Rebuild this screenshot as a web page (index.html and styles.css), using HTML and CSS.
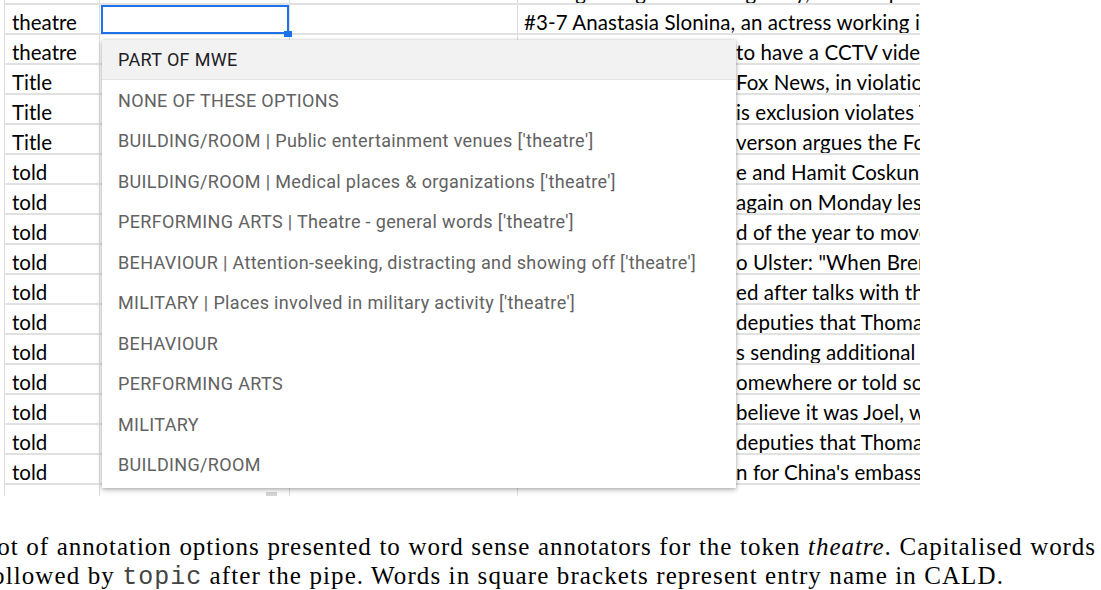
FILE: index.html
```html
<!DOCTYPE html>
<html lang="en">
<head>
<meta charset="utf-8">
<title>Annotation options</title>
<link rel="stylesheet" href="styles.css">
</head>
<body>
<div class="page">
  <div class="sheet">
    <div class="row first">
      <div class="cell c1">theatre</div><div class="cell c2"></div><div class="cell c3"></div>
      <div class="cell c4">Ending a long run at the gallery, the company played; on for another year</div>
    </div>
    <div class="row">
      <div class="cell c1">theatre</div><div class="cell c2 sel"></div><div class="cell c3"></div>
      <div class="cell c4">#3-7 Anastasia Slonina, an actress working in the theatre</div>
    </div>
    <div class="row">
      <div class="cell c1">theatre</div><div class="cell c2"></div><div class="cell c3"></div>
      <div class="cell c4"><span class="hid">Police said they were lucky enough</span> to have a CCTV video of the entrance</div>
    </div>
    <div class="row">
      <div class="cell c1">Title</div><div class="cell c2"></div><div class="cell c3"></div>
      <div class="cell c4"><span class="hid">He was later barred from the debate by </span>Fox News, in violation of its rules</div>
    </div>
    <div class="row">
      <div class="cell c1">Title</div><div class="cell c2"></div><div class="cell c3"></div>
      <div class="cell c4"><span class="hid">The lawsuit claims that th</span>is exclusion violates Title IX</div>
    </div>
    <div class="row">
      <div class="cell c1">Title</div><div class="cell c2"></div><div class="cell c3"></div>
      <div class="cell c4"><span class="hid">In his complaint, I</span>verson argues the Fox network</div>
    </div>
    <div class="row">
      <div class="cell c1">told</div><div class="cell c2"></div><div class="cell c3"></div>
      <div class="cell c4"><span class="hid">Both Michael Bor</span>e and Hamit Coskun were told</div>
    </div>
    <div class="row">
      <div class="cell c1">told</div><div class="cell c2"></div><div class="cell c3"></div>
      <div class="cell c4"><span class="hid">The two sides met</span> again on Monday less than a week</div>
    </div>
    <div class="row">
      <div class="cell c1">told</div><div class="cell c2"></div><div class="cell c3"></div>
      <div class="cell c4"><span class="hid">They were told to wait until the en</span>d of the year to move out</div>
    </div>
    <div class="row">
      <div class="cell c1">told</div><div class="cell c2"></div><div class="cell c3"></div>
      <div class="cell c4"><span class="hid">He later told a reporter t</span>o Ulster: "When Brendan came</div>
    </div>
    <div class="row">
      <div class="cell c1">told</div><div class="cell c2"></div><div class="cell c3"></div>
      <div class="cell c4"><span class="hid">The strike was call</span>ed after talks with the union</div>
    </div>
    <div class="row">
      <div class="cell c1">told</div><div class="cell c2"></div><div class="cell c3"></div>
      <div class="cell c4"><span class="hid">A witness told the </span>deputies that Thomas had left</div>
    </div>
    <div class="row">
      <div class="cell c1">told</div><div class="cell c2"></div><div class="cell c3"></div>
      <div class="cell c4"><span class="hid">The ministry said it i</span>s sending additional workers</div>
    </div>
    <div class="row">
      <div class="cell c1">told</div><div class="cell c2"></div><div class="cell c3"></div>
      <div class="cell c4"><span class="hid">Maybe he had read it s</span>omewhere or told someone</div>
    </div>
    <div class="row">
      <div class="cell c1">told</div><div class="cell c2"></div><div class="cell c3"></div>
      <div class="cell c4"><span class="hid">She told the court: "I</span> believe it was Joel, who</div>
    </div>
    <div class="row">
      <div class="cell c1">told</div><div class="cell c2"></div><div class="cell c3"></div>
      <div class="cell c4"><span class="hid">A neighbour told the </span>deputies that Thomas was</div>
    </div>
    <div class="row">
      <div class="cell c1">told</div><div class="cell c2"></div><div class="cell c3"></div>
      <div class="cell c4"><span class="hid">He told the paper he had no pla</span>n for China's embassy</div>
    </div>
    <div class="row last">
      <div class="cell c1"></div><div class="cell c2"><span class="grip"></span></div><div class="cell c3"></div><div class="cell c4"></div>
    </div>
  </div>

  <ul class="dropdown">
    <li class="opt active">PART OF MWE</li>
    <li class="opt">NONE OF THESE OPTIONS</li>
    <li class="opt">BUILDING/ROOM | Public entertainment venues ['theatre']</li>
    <li class="opt">BUILDING/ROOM | Medical places &amp; organizations ['theatre']</li>
    <li class="opt">PERFORMING ARTS | Theatre - general words ['theatre']</li>
    <li class="opt">BEHAVIOUR | Attention-seeking, distracting and showing off ['theatre']</li>
    <li class="opt">MILITARY | Places involved in military activity ['theatre']</li>
    <li class="opt">BEHAVIOUR</li>
    <li class="opt">PERFORMING ARTS</li>
    <li class="opt">MILITARY</li>
    <li class="opt">BUILDING/ROOM</li>
  </ul>

  <div class="caption">
    <div class="cap-line l1"><span>Figure 2: Screenshot of annotation options presented to word sense annotators for the token <em>theatre</em>. Capitalised words</span></div>
    <div class="cap-line l2"><span>are followed by <code>topic</code> after the pipe. Words in square brackets represent entry name in CALD.</span></div>
  </div>
</div>
</body>
</html>
```

FILE: styles.css
```css
* { box-sizing: border-box; }
html, body { margin: 0; padding: 0; }
body {
  width: 1101px;
  height: 590px;
  overflow: hidden;
  background: #fff;
}
.page {
  position: relative;
  display: flow-root;
  width: 1101px;
  height: 590px;
}

/* spreadsheet */
.sheet {
  margin-left: 4px;
  width: 916px;
  border-left: 1px solid #dcdcdc;
  overflow: hidden;
  font-family: "Lato", "Open Sans", sans-serif;
  font-size: 20.5px;
  color: #000;
}
.row {
  display: grid;
  grid-template-columns: 95px 190px 228px 402px;
  height: 30px;
  border-bottom: 2px solid #e1e1e1;
}
.row.first { height: 5px; }
.row.last {
  height: 11px;
  border-bottom: 0;
}
.cell {
  display: flex;
  align-items: flex-end;
  padding: 0 6px 1px 7px;
  line-height: 20px;
  white-space: nowrap;
  overflow: hidden;
  border-right: 1px solid #dcdcdc;
}
.cell.c4 { border-right: 0; padding-left: 6px; letter-spacing: 0.1px; }
.cell.sel {
  position: relative;
  overflow: visible;
}
.cell.sel::before {
  content: "";
  position: absolute;
  left: 1px;
  top: 0;
  right: 0;
  bottom: -1px;
  border: 2px solid #1a73e8;
}
.cell.sel::after {
  content: "";
  position: absolute;
  right: -3px;
  bottom: -4px;
  width: 8px;
  height: 6px;
  background: #1a73e8;
}
.hid {
  display: inline-flex;
  justify-content: flex-end;
  width: 212px;
  overflow: hidden;
  flex-shrink: 0;
}
.row.last .c2 {
  justify-content: flex-end;
  padding: 0 12px 0 0;
}
.grip {
  width: 11px;
  height: 4px;
  background: #d6d6d6;
}

/* dropdown */
.dropdown {
  position: absolute;
  left: 102px;
  top: 40px;
  width: 634px;
  margin: 0;
  padding: 0 0 3px;
  list-style: none;
  background: #fff;
  box-shadow: 0 2px 5px rgba(0, 0, 0, 0.28), 0 0 3px rgba(0, 0, 0, 0.14);
  font-family: "Roboto", "Liberation Sans", sans-serif;
  font-size: 18px;
  letter-spacing: 0.35px;
  color: #626262;
}
.opt {
  display: flex;
  align-items: center;
  height: 40.5px;
  padding-left: 16px;
  white-space: nowrap;
}
.opt.active {
  height: 40px;
  background: #f2f2f2;
  color: #202124;
  border-bottom: 1px solid #e2e2e2;
}

/* caption */
.caption {
  margin-top: 37px;
  font-family: "Liberation Serif", "Times New Roman", serif;
  font-size: 25px;
  line-height: 28.5px;
  letter-spacing: 0.95px;
  color: #000;
}
.cap-line {
  display: flex;
  justify-content: flex-end;
  white-space: nowrap;
}
.cap-line > span { flex-shrink: 0; }
.l1 { width: 1096px; word-spacing: 0.5px; }
.l2 { width: 1004px; letter-spacing: 1.1px; }
.caption code {
  font-family: "Liberation Mono", "Courier New", monospace;
  font-size: 25px;
  letter-spacing: 1px;
  color: #444;
}
```
